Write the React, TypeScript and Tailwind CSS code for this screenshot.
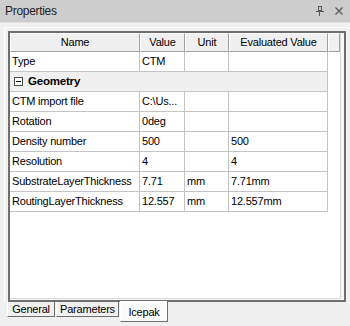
import React from 'react';

type Row = { name: string; value: string; unit: string; evaluated: string };

const geometryRows: Row[] = [
  { name: 'CTM import file', value: 'C:\\Us...', unit: '', evaluated: '' },
  { name: 'Rotation', value: '0deg', unit: '', evaluated: '' },
  { name: 'Density number', value: '500', unit: '', evaluated: '500' },
  { name: 'Resolution', value: '4', unit: '', evaluated: '4' },
  { name: 'SubstrateLayerThickness', value: '7.71', unit: 'mm', evaluated: '7.71mm' },
  { name: 'RoutingLayerThickness', value: '12.557', unit: 'mm', evaluated: '12.557mm' },
];

const cell = 'h-full flex items-center pl-[2px] border-r border-[#c4c4c4] whitespace-nowrap overflow-hidden';

const HeaderCell: React.FC<{ width: string; label?: string }> = ({ width, label }) => (
  <div className={`${width} h-full flex items-center justify-center bg-[#f0f0f0] border-t border-l border-white border-r border-b border-r-[#a0a0a0] border-b-[#a0a0a0]`}>
    {label}
  </div>
);

const DataRow: React.FC<{ row: Row }> = ({ row }) => (
  <div className="flex h-[20px] w-[318px] border-b border-[#c4c4c4]">
    <div className={`${cell} w-[130px]`}>{row.name}</div>
    <div className={`${cell} w-[45px]`}>{row.value}</div>
    <div className={`${cell} w-[44px]`}>{row.unit}</div>
    <div className={`${cell} w-[99px]`}>{row.evaluated}</div>
  </div>
);

const PinIcon = () => (
  <svg width="8" height="10" viewBox="0 0 8 10" className="block">
    <rect x="2.5" y="0.5" width="3" height="4" fill="none" stroke="#555" />
    <line x1="0" y1="5.5" x2="8" y2="5.5" stroke="#555" />
    <line x1="3.5" y1="6" x2="3.5" y2="10" stroke="#555" />
  </svg>
);

const CloseIcon = () => (
  <svg width="8" height="8" viewBox="0 0 8 8" className="block">
    <path d="M0.5 0.5 L7.5 7.5 M7.5 0.5 L0.5 7.5" stroke="#555" strokeWidth="1.2" />
  </svg>
);

const App: React.FC = () => {
  return (
    <div className="w-[350px] h-[326px] overflow-hidden bg-[#f0f0f0] font-['Liberation_Sans',Arial,sans-serif] text-[11px] tracking-[-0.2px] text-black flex flex-col">
      {/* title bar */}
      <div className="h-[23px] flex items-center bg-[#cdcdcd] border-b border-[#e2e2e2] pl-[5px] pr-[7px]">
        <span className="text-[12px] tracking-[-0.3px] text-[#1e1e1e]">Properties</span>
        <div className="ml-auto flex items-center gap-[11px]">
          <PinIcon />
          <CloseIcon />
        </div>
      </div>

      <div className="flex flex-col pl-[4px] pt-[4px]">
        <div className="border-l border-t border-white pl-[3px] pt-[3px]">
          <div className="w-[338px] h-[271px] border-2 border-[#6e6e6e] bg-[#f7f7f7]">
            <div className="w-[331px] h-[266px] bg-white border-r border-b border-[#d9d9d9]">
              {/* header */}
              <div className="flex h-[19px]">
                <HeaderCell width="w-[130px]" label="Name" />
                <HeaderCell width="w-[45px]" label="Value" />
                <HeaderCell width="w-[44px]" label="Unit" />
                <HeaderCell width="w-[99px]" label="Evaluated Value" />
                <HeaderCell width="w-[12px]" />
              </div>

              <DataRow row={{ name: 'Type', value: 'CTM', unit: '', evaluated: '' }} />

              {/* group row */}
              <div className="flex items-center h-[20px] w-[318px] bg-[#f0f0f0] border-b border-r border-[#c4c4c4] pl-[4px]">
                <div className="w-[9px] h-[9px] border border-[#4a4a4a] bg-white flex items-center justify-center">
                  <div className="w-[5px] h-px bg-black" />
                </div>
                <span className="ml-[5px] font-bold text-[11.5px]">Geometry</span>
              </div>

              {geometryRows.map(row => (
                <DataRow key={row.name} row={row} />
              ))}
            </div>
          </div>
        </div>

        {/* tabs */}
        <div className="flex items-start ml-[3px] gap-px">
          <div className="w-[48px] h-[15px] flex items-center justify-center bg-[#f0f0f0] border-l border-white border-r border-b border-r-[#6e6e6e] border-b-[#6e6e6e]">
            General
          </div>
          <div className="w-[63px] h-[15px] flex items-center justify-center bg-[#f0f0f0] border-l border-white border-r border-b border-r-[#6e6e6e] border-b-[#6e6e6e]">
            Parameters
          </div>
          <div className="w-[48px] h-[21px] -mt-[1px] pt-[3px] flex items-center justify-center bg-[#fbfbfb] border-l border-white border-r border-b border-r-[#6e6e6e] border-b-[#6e6e6e]">
            Icepak
          </div>
        </div>
      </div>
    </div>
  );
};

export default App;
